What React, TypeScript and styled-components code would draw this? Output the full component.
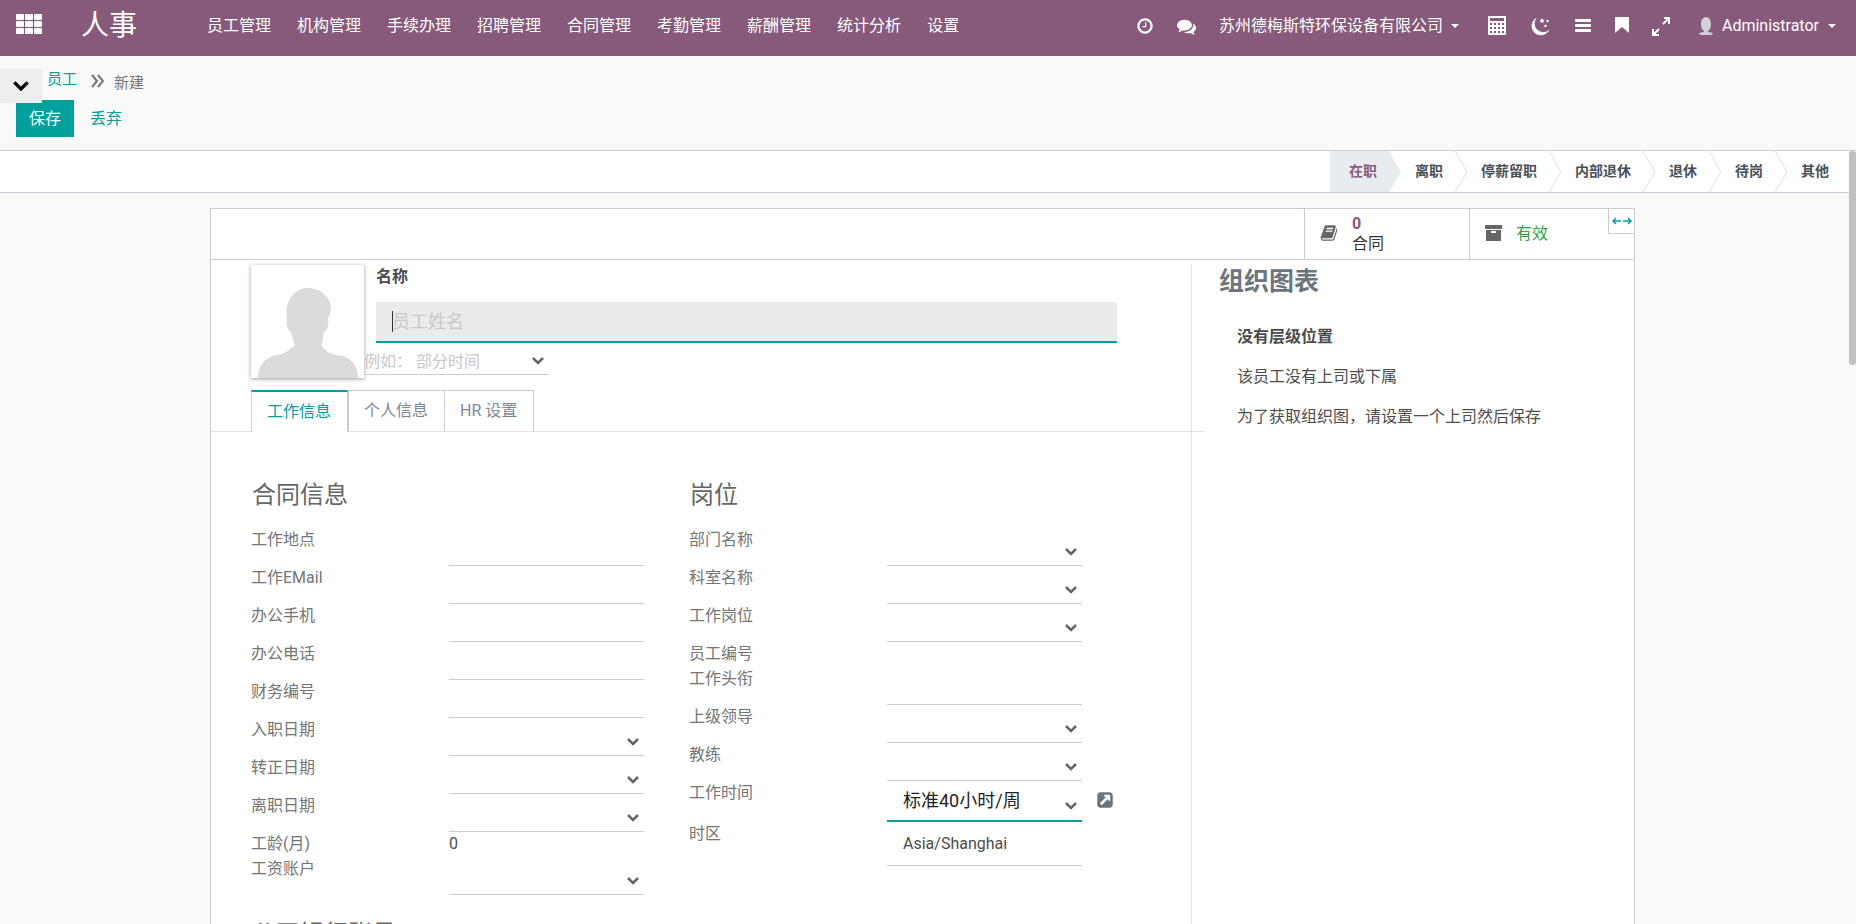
import React from 'react';
import styled, { createGlobalStyle, css } from 'styled-components';

const color = {
  brand: '#875a7b',
  teal: '#00a09d',
  line: '#cccccc',
  edge: '#c9ccd2',
  label: '#666666',
  text: '#4c4c4c',
  muted: '#c8c8c8',
};

const GlobalStyle = createGlobalStyle`
  * { box-sizing: border-box; }
  html, body, #root { height: 100%; }
  body {
    margin: 0;
    overflow: hidden;
    background: #f9f9f9;
    color: ${color.text};
    font-family: Roboto, "Noto Sans CJK SC", sans-serif;
    font-size: 16px;
    line-height: 24px;
  }
  h1, h2, h3, p, ul, ol { margin: 0; padding: 0; list-style: none; }
  button, input, select { font: inherit; color: inherit; border: 0; padding: 0; margin: 0; background: none; border-radius: 0; }
  a { color: inherit; text-decoration: none; }
  svg { display: block; flex: none; }
`;

const Page = styled.div`
  display: flex;
  flex-direction: column;
  height: 100vh;
`;

const Navbar = styled.header`
  display: flex;
  align-items: flex-start;
  height: 56px;
  padding: 0 20px 0 16px;
  background: ${color.brand};
  color: #fff;
  flex: none;
`;

const IconButton = styled.button<{ $size?: number }>`
  display: flex;
  align-items: center;
  justify-content: center;
  width: ${p => p.$size ?? 20}px;
  height: 52px;
  flex: none;
`;

const AppsButton = styled.button`
  display: flex;
  align-items: center;
  height: 48px;
`;

const Brand = styled.a`
  margin-left: 39px;
  width: 104px;
  font-size: 28px;
  line-height: 52px;
`;

const Menu = styled.nav`
  display: flex;
  gap: 26px;
  margin-left: 22px;
  line-height: 52px;
`;

const Systray = styled.div`
  display: flex;
  align-items: center;
  margin-left: auto;
  height: 52px;
`;

const Tools = styled.div`
  display: flex;
  gap: 22px;
  margin: 0 28px 0 23px;
`;

const TrayButton = styled.button`
  display: flex;
  align-items: center;
  gap: 8px;
  height: 52px;
`;

const CompanyButton = styled(TrayButton)`
  margin-right: 6px;
`;

const UserButton = styled(TrayButton)`
  gap: 9px;
`;

const Caret = styled.span`
  border: 4px solid transparent;
  border-top-color: currentColor;
  border-bottom: 0;
`;

const ControlPanel = styled.section`
  display: flex;
  flex-direction: column;
  gap: 4px;
  height: 95px;
  padding-bottom: 13px;
  border-bottom: 1px solid ${color.line};
  flex: none;
`;

const CrumbRow = styled.div`
  display: flex;
  align-items: flex-start;
  height: 40px;
`;

const Toggle = styled.button`
  display: flex;
  align-items: center;
  justify-content: center;
  width: 42px;
  height: 34px;
  margin-top: 13px;
  background: #eeeeee;
  color: #000;
  position: relative;
`;

const Crumbs = styled.ol`
  display: flex;
  align-items: flex-end;
  margin: 8px 0 0 5px;
  font-size: 15px;
  color: #6c757d;
  svg { margin: 0 10px 6px 14px; }
`;

const Crumb = styled.li<{ $current?: boolean }>`
  color: ${p => (p.$current ? '#777777' : color.teal)};
  line-height: ${p => (p.$current ? 22 : 30)}px;
`;

const Actions = styled.div`
  display: flex;
  gap: 3px;
  padding-left: 16px;
`;

const ActionButton = styled.button<{ $primary?: boolean }>`
  height: 37px;
  padding: 0 13px;
  background: ${p => (p.$primary ? color.teal : 'transparent')};
  color: ${p => (p.$primary ? '#fff' : color.teal)};
`;

const Content = styled.main`
  display: flex;
  flex: 1;
  min-height: 0;
  overflow: hidden;
`;

const ScrollArea = styled.div`
  flex: 1;
  min-width: 0;
  overflow: hidden;
`;

const ScrollTrack = styled.div`
  width: 7px;
  flex: none;
`;

const ScrollThumb = styled.div`
  height: 214px;
  border-radius: 3px;
  background: #c1c1c1;
`;

const StatusBar = styled.div`
  display: flex;
  justify-content: flex-end;
  height: 42px;
  background: #fff;
  border-bottom: 1px solid ${color.edge};
`;

const Step = styled.button<{ $active?: boolean; $last?: boolean }>`
  display: flex;
  align-items: center;
  justify-content: flex-end;
  gap: 12px;
  height: 41px;
  line-height: 20px;
  padding-left: ${p => (p.$active ? 19 : 14)}px;
  padding-right: ${p => (p.$last ? 20 : 0)}px;
  background: ${p => (p.$active ? 'linear-gradient(to right, #e9ecef calc(100% - 12px), transparent 0)' : 'none')};
  color: ${p => (p.$active ? color.brand : '#495057')};
  font-size: 14px;
  font-weight: 700;
`;

const StepLabel = styled.span`
  padding-bottom: 2px;
`;

const Sheet = styled.article`
  max-width: 1425px;
  min-height: 900px;
  margin: 15px auto 0;
  background: #fff;
  border: 1px solid ${color.edge};
`;

const SheetWrap = styled.div`
  padding: 0 4px 0 0;
`;

const ButtonBox = styled.div`
  display: flex;
  justify-content: flex-end;
  height: 51px;
  border-bottom: 1px solid ${color.edge};
`;

const StatButton = styled.button<{ $green?: boolean }>`
  display: flex;
  align-items: center;
  gap: 14px;
  width: 165px;
  padding-left: 15px;
  border-left: 1px solid ${color.edge};
  text-align: left;
  line-height: 20px;
  color: ${p => (p.$green ? '#28a745' : '#333333')};
  svg { color: ${color.label}; margin-bottom: 2px; }
`;

const StatText = styled.span`
  display: flex;
  flex-direction: column;
  b { color: ${color.brand}; }
`;

const WidthToggle = styled.button`
  display: flex;
  align-items: center;
  justify-content: center;
  width: 26px;
  height: 25px;
  margin-left: -26px;
  border: solid ${color.line};
  border-width: 0 0 1px 1px;
  color: ${color.teal};
  background: #fff;
`;

const SheetBody = styled.div`
  display: flex;
  align-items: stretch;
  padding-top: 5px;
  min-height: 850px;
`;

const FormSide = styled.div`
  width: 980px;
  flex: none;
`;

const ChartSide = styled.aside`
  flex: 1;
  border-left: 1px solid #e0e2e6;
  padding-left: 27px;
`;

const ChartTitle = styled.h2`
  font-size: 25px;
  line-height: 34px;
  color: #6c757d;
`;

const ChartNote = styled.div`
  display: flex;
  flex-direction: column;
  gap: 16px;
  padding: 26px 0 0 18px;
`;

const Identity = styled.div`
  display: flex;
  align-items: flex-start;
  height: 125px;
  padding: 0 74px 0 40px;
`;

const Avatar = styled.div`
  display: flex;
  align-items: flex-end;
  justify-content: center;
  width: 113px;
  height: 113px;
  flex: none;
  box-shadow: 0 1px 4px rgba(0, 0, 0, 0.4);
  background: #fff;
`;

const IdentityFields = styled.div`
  flex: 1;
  display: flex;
  flex-direction: column;
`;

const NameLabel = styled.label`
  margin-left: 12px;
  font-weight: 700;
`;

const NameInput = styled.input`
  height: 41px;
  margin: 13px 0 0 12px;
  padding: 0 16px;
  background: linear-gradient(#333, #333) 16px 9px / 1px 21px no-repeat, #ebebeb;
  border-bottom: 2px solid ${color.teal};
  font-size: 18px;
  outline: none;
  caret-color: transparent;
  &::placeholder { color: ${color.muted}; opacity: 1; }
`;

const FieldBox = styled.div<{ $width?: number; $focus?: boolean; $tall?: boolean }>`
  display: flex;
  align-items: center;
  width: ${p => p.$width ?? 195}px;
  border-bottom: 1px solid ${color.line};
  color: #666666;
  input, select {
    flex: 1;
    min-width: 0;
    height: 100%;
    appearance: none;
    outline: none;
  }
  input::placeholder { color: ${color.muted}; opacity: 1; }
  ${p => p.$focus && css`
    border-bottom: 2px solid ${color.teal};
    input { padding: 0 0 4px 16px; color: #222222; font-size: 18px; }
  `}
  ${p => p.$tall && css`select { padding-left: 16px; color: ${color.text}; }`}
`;

const TagBox = styled(FieldBox)`
  height: 32px;
  padding-top: 6px;
  svg { margin: 0 5px 2px 0; }
`;

const Tabs = styled.div`
  display: flex;
  height: 42px;
  padding-left: 40px;
  margin-right: -13px;
  border-bottom: 1px solid #dee2e6;
  position: relative;
`;

const Tab = styled.button<{ $active?: boolean }>`
  height: ${p => (p.$active ? 42 : 41)}px;
  padding: 0 16px 0 15px;
  border: 1px solid ${color.edge};
  border-bottom-width: 0;
  margin-right: -1px;
  background: #fff;
  color: #7c8795;
  ${p => p.$active && css`
    color: ${color.teal};
    border-top: 2px solid ${color.teal};
    margin-right: 0;
  `}
`;

const Groups = styled.div`
  display: grid;
  grid-template-columns: 438px 1fr;
  padding: 46px 0 0 40px;
`;

const GroupTitle = styled.h3`
  margin-bottom: 16px;
  padding-left: 1px;
  font-size: 24px;
  line-height: 34px;
  font-weight: 400;
  color: ${color.label};
`;

const Row = styled.div<{ $height?: number }>`
  display: grid;
  grid-template-columns: 198px auto auto 1fr;
  height: ${p => p.$height ?? 38}px;
  color: ${color.text};
  label { color: #757575; }
  svg { margin: 10px 5px 0 0; }
`;

const LinkButton = styled.button`
  display: flex;
  align-items: center;
  margin-left: 14px;
  padding-bottom: 4px;
  color: #6c757d;
  svg { margin: 0; }
`;

const NextTitle = styled(GroupTitle)`
  margin-top: 22px;
`;

/* Icons */

const Glyph = ({ d, size = 18 }: { d: string; size?: number }) => (
  <svg width={size} height={size} viewBox="0 0 1792 1792" fill="currentColor" aria-hidden="true">
    <path d={d} />
  </svg>
);

const glyphs = {
  clock:
    'M1024 544v448q0 14-9 23t-23 9h-320q-14 0-23-9t-9-23v-64q0-14 9-23t23-9h224v-352q0-14 9-23t23-9h64q14 0 23 9t9 23zm416 352q0-148-73-273t-198-198-273-73-273 73-198 198-73 273 73 273 198 198 273 73 273-73 198-198 73-273zm224 0q0 209-103 385.5t-279.5 279.5-385.5 103-385.5-103-279.5-279.5-103-385.5 103-385.5 279.5-279.5 385.5-103 385.5 103 279.5 279.5 103 385.5z',
  comments:
    'M1408 768q0 139-94 257t-256.5 186.5-353.5 68.5q-86 0-176-16-124 88-278 128-36 9-86 16h-3q-11 0-20.5-8t-11.5-21q-1-3-1-6.5t.5-6.5 2-6l2.5-5 3.5-5.5 4-5 4.5-5 4-4.5q5-6 23-25t26-29.5 22.5-29 25-38.5 20.5-44q-124-72-195-177t-71-224q0-139 94-257t256.5-186.5 353.5-68.5 353.5 68.5 256.5 186.5 94 257zm384 256q0 120-71 224.5t-195 176.5q10 24 20.5 44t25 38.5 22.5 29 26 29.5 23 25q1 1 4 4.5t4.5 5 4 5 3.5 5.5l2.5 5 2 6 .5 6.5-1 6.5q-3 14-13 22t-22 7q-50-7-86-16-154-40-278-128-90 16-176 16-271 0-472-132 58 4 88 4 161 0 309-45t264-129q125-92 192-212t67-254q0-77-23-152 129 71 204 178t75 230z',
  book:
    'M1703 478q40 57 18 129l-275 906q-19 64-76.5 107.5t-122.5 43.5h-923q-77 0-148.5-53.5t-99.5-131.5q-24-67-2-127 0-4 3-27t4-37q1-8-3-21.5t-3-19.5q2-11 8-21t16.5-23.5 16.5-23.5q23-38 45-91.5t30-91.5q3-10 .5-30t-.5-28q3-11 17-28t17-23q21-36 42-92t25-90q1-9-2.5-32t.5-28q4-13 22-30.5t22-22.5q19-26 42.5-84.5t27.5-96.5q1-8-3-25.5t-2-26.5q2-8 9-18t18-23 17-21q8-12 16.5-30.5t15-35 16-36 19.5-32 26.5-23.5 36-11.5 47.5 5.5l-1 3q38-9 51-9h761q74 0 114 56t18 130l-274 906q-36 119-71.5 153.5t-128.5 34.5h-869q-27 0-38 15-11 16-1 43 24 70 144 70h923q29 0 56-15.5t35-41.5l300-987q7-22 5-57 38 15 59 43zm-1064 2q-4 13 2 22.5t20 9.5h608q13 0 25.5-9.5t16.5-22.5l21-64q4-13-2-22.5t-20-9.5h-608q-13 0-25.5 9.5t-16.5 22.5zm-83 256q-4 13 2 22.5t20 9.5h608q13 0 25.5-9.5t16.5-22.5l21-64q4-13-2-22.5t-20-9.5h-608q-13 0-25.5 9.5t-16.5 22.5z',
  external:
    'M1408 928v-480q0-26-19-45t-45-19h-480q-42 0-59 39-17 41 14 70l144 144-534 534q-19 19-19 45t19 45l102 102q19 19 45 19t45-19l534-534 144 144q18 19 45 19 12 0 25-5 39-17 39-59zm256-512v960q0 119-84.5 203.5t-203.5 84.5h-960q-119 0-203.5-84.5t-84.5-203.5v-960q0-119 84.5-203.5t203.5-84.5h960q119 0 203.5 84.5t84.5 203.5z',
};

const AppsIcon = () => (
  <svg width="26" height="20" viewBox="0 0 26 20" fill="currentColor" aria-hidden="true">
    {[0, 9, 18].map(x => [0, 7, 14].map(y => <rect key={`${x}-${y}`} x={x} y={y} width="8" height="6" rx="1" />))}
  </svg>
);

const CalculatorIcon = () => (
  <svg width="18" height="20" viewBox="0 0 18 20" aria-hidden="true">
    <rect width="18" height="19" rx="1" fill="#fff" />
    <rect x="2" y="2" width="14" height="3" fill={color.brand} />
    {[2, 6, 10, 14].map(x => [7, 11, 15].map(y => <rect key={`${x}-${y}`} x={x} y={y} width="2" height="2" fill={color.brand} />))}
  </svg>
);

const MoonIcon = () => (
  <svg width="20" height="20" viewBox="0 0 20 20" fill="currentColor" aria-hidden="true">
    <path d="M7 1.500A9.300 9.300 0 1 0 19.500 13.500A7.800 7.800 0 0 1 7 1.500z" />
    <path d="M12 2l.8 1.700 1.800.3-1.300 1.300.3 1.800-1.600-.9-1.600.9.3-1.800L9.400 4l1.800-.3z" />
    <circle cx="17.500" cy="5" r="1.200" />
    <circle cx="15.500" cy="10" r="1.200" />
  </svg>
);

const BarsIcon = () => (
  <svg width="16" height="14" viewBox="0 0 16 14" fill="currentColor" aria-hidden="true">
    <rect width="16" height="3" rx="1" />
    <rect y="5" width="16" height="3" rx="1" />
    <rect y="10" width="16" height="3" rx="1" />
  </svg>
);

const BookmarkIcon = () => (
  <svg width="14" height="18" viewBox="0 0 14 18" fill="currentColor" aria-hidden="true">
    <path d="M1 0h12q1 0 1 1v15l-7-6-7 6V1q0-1 1-1z" />
  </svg>
);

const FullscreenIcon = () => (
  <svg width="20" height="20" viewBox="0 0 20 20" fill="none" stroke="currentColor" strokeWidth="2" aria-hidden="true">
    <path d="M13 2h5v6M18 2l-6 6M2 13v6h6M2 19l6-6" />
  </svg>
);

const UserIcon = () => (
  <svg width="14" height="18" viewBox="0 0 14 18" aria-hidden="true">
    <path d="M7 0c3 0 5 3 5 7 0 3-1 6-3 7v1c3 0 5 1 5 2l-2 1H2l-2-1c0-1 2-2 5-2v-1C3 13 2 10 2 7c0-4 2-7 5-7z" fill="#cdd3d8" />
  </svg>
);

const ChevronIcon = ({ width = 12 }: { width?: number }) => (
  <svg width={width} height={(width * 2) / 3} viewBox="0 0 12 8" fill="none" stroke="currentColor" strokeWidth="2.500" aria-hidden="true">
    <path d="M1 1l5 5 5-5" />
  </svg>
);

const DoubleChevron = () => (
  <svg width="13" height="14" viewBox="0 0 13 14" fill="none" stroke="currentColor" strokeWidth="2" aria-hidden="true">
    <path d="M1 1l5 6-5 6M7 1l5 6-5 6" />
  </svg>
);

const ArchiveIcon = () => (
  <svg width="17" height="16" viewBox="0 0 17 16" fill="currentColor" aria-hidden="true">
    <rect width="17" height="4" />
    <path d="M1 5h15v11H1zM6 6v2h5V6z" fillRule="evenodd" />
  </svg>
);

const WidthIcon = () => (
  <svg width="20" height="8" viewBox="0 0 20 8" fill="none" stroke="currentColor" strokeWidth="1.500" aria-hidden="true">
    <path d="M9 4H1M4 1L1 4l3 3M11 4h8M16 1l3 3-3 3" />
  </svg>
);

const StepArrow = ({ filled }: { filled?: boolean }) => (
  <svg width="12" height="41" viewBox="0 0 12 41" fill={filled ? '#e9ecef' : 'none'} stroke={filled ? 'none' : '#dee2e6'} aria-hidden="true">
    <path d="M0 0l12 21L0 41" />
  </svg>
);

const PersonShape = () => (
  <svg width="100" height="90" viewBox="0 0 100 90" fill="#dbdbdb" aria-hidden="true">
    <path d="M50 0c5 0 9 2 13 3 6 6 10 10 10 17 0 5-2 7-3 10 1 6 0 12-4 14-1 5-1 9-3 13 4 6 9 9 16 10 12 1 21 9 21 23H0c0-14 9-22 20-23 7-2 12-5 17-10-2-4-3-9-4-13-4-2-5-8-4-14-1-5-1-10 1-15C33 6 41 0 50 0z" />
  </svg>
);

/* Data */

const menuItems = ['员工管理', '机构管理', '手续办理', '招聘管理', '合同管理', '考勤管理', '薪酬管理', '统计分析', '设置'];
const steps = ['在职', '离职', '停薪留职', '内部退休', '退休', '待岗', '其他'];

type Field = { label: string; kind: 'text' | 'pick' | 'read'; value?: string };

const contractFields: Field[] = [
  { label: '工作地点', kind: 'text' },
  { label: '工作EMail', kind: 'text' },
  { label: '办公手机', kind: 'text' },
  { label: '办公电话', kind: 'text' },
  { label: '财务编号', kind: 'text' },
  { label: '入职日期', kind: 'pick' },
  { label: '转正日期', kind: 'pick' },
  { label: '离职日期', kind: 'pick' },
  { label: '工龄(月)', kind: 'read', value: '0' },
  { label: '工资账户', kind: 'pick' },
];

const positionFields: Field[] = [
  { label: '部门名称', kind: 'pick' },
  { label: '科室名称', kind: 'pick' },
  { label: '工作岗位', kind: 'pick' },
  { label: '员工编号', kind: 'read' },
  { label: '工作头衔', kind: 'text' },
  { label: '上级领导', kind: 'pick' },
  { label: '教练', kind: 'pick' },
];

const FormRow = ({ field, id }: { field: Field; id: string }) =>
  field.kind === 'read' ? (
    <Row $height={25}>
      <label htmlFor={id}>{field.label}</label>
      <output id={id}>{field.value}</output>
    </Row>
  ) : (
    <Row>
      <label htmlFor={id}>{field.label}</label>
      <FieldBox>
        <input id={id} type="text" />
        {field.kind === 'pick' && <ChevronIcon />}
      </FieldBox>
    </Row>
  );

export default function App() {
  return (
    <Page>
      <GlobalStyle />
      <Navbar>
        <AppsButton aria-label="应用"><AppsIcon /></AppsButton>
        <Brand href="#">人事</Brand>
        <Menu>
          {menuItems.map(item => <a key={item} href="#">{item}</a>)}
        </Menu>
        <Systray>
          <TrayButton aria-label="活动"><Glyph d={glyphs.clock} /></TrayButton>
          <Tools>
            <IconButton aria-label="消息"><Glyph d={glyphs.comments} size={19} /></IconButton>
            <CompanyButton>苏州德梅斯特环保设备有限公司<Caret /></CompanyButton>
            <IconButton aria-label="计算器"><CalculatorIcon /></IconButton>
            <IconButton $size={22} aria-label="夜间模式"><MoonIcon /></IconButton>
            <IconButton aria-label="菜单"><BarsIcon /></IconButton>
            <IconButton $size={14} aria-label="书签"><BookmarkIcon /></IconButton>
            <IconButton aria-label="全屏"><FullscreenIcon /></IconButton>
          </Tools>
          <UserButton><UserIcon />Administrator<Caret /></UserButton>
        </Systray>
      </Navbar>

      <ControlPanel>
        <CrumbRow>
          <Toggle aria-label="展开"><ChevronIcon width={16} /></Toggle>
          <Crumbs>
            <Crumb><a href="#">员工</a></Crumb>
            <li aria-hidden="true"><DoubleChevron /></li>
            <Crumb $current>新建</Crumb>
          </Crumbs>
        </CrumbRow>
        <Actions>
          <ActionButton $primary>保存</ActionButton>
          <ActionButton>丢弃</ActionButton>
        </Actions>
      </ControlPanel>

      <Content>
        <ScrollArea>
          <StatusBar>
            {steps.map((step, i) => (
              <Step key={step} $active={i === 0} $last={i === steps.length - 1}>
                <StepLabel>{step}</StepLabel>
                {i < steps.length - 1 && <StepArrow filled={i === 0} />}
              </Step>
            ))}
          </StatusBar>
          <SheetWrap>
            <Sheet>
              <ButtonBox>
                <StatButton>
                  <Glyph d={glyphs.book} />
                  <StatText><b>0</b>合同</StatText>
                </StatButton>
                <StatButton $green><ArchiveIcon />有效</StatButton>
                <WidthToggle aria-label="切换宽度"><WidthIcon /></WidthToggle>
              </ButtonBox>
              <SheetBody>
                <FormSide>
                  <Identity>
                    <Avatar><PersonShape /></Avatar>
                    <IdentityFields>
                      <NameLabel htmlFor="name">名称</NameLabel>
                      <NameInput id="name" placeholder="员工姓名" autoFocus />
                      <TagBox $width={185}>
                        <input aria-label="标签" placeholder="例如： 部分时间" />
                        <ChevronIcon />
                      </TagBox>
                    </IdentityFields>
                  </Identity>
                  <Tabs role="tablist">
                    <Tab role="tab" $active>工作信息</Tab>
                    <Tab role="tab">个人信息</Tab>
                    <Tab role="tab">HR 设置</Tab>
                  </Tabs>
                  <Groups>
                    <section>
                      <GroupTitle>合同信息</GroupTitle>
                      {contractFields.map((f, i) => <FormRow key={f.label} field={f} id={`contract-${i}`} />)}
                      <NextTitle>公司银行账号</NextTitle>
                    </section>
                    <section>
                      <GroupTitle>岗位</GroupTitle>
                      {positionFields.map((f, i) => <FormRow key={f.label} field={f} id={`position-${i}`} />)}
                      <Row $height={41}>
                        <label htmlFor="hours">工作时间</label>
                        <FieldBox $focus>
                          <input id="hours" defaultValue="标准40小时/周" />
                          <ChevronIcon />
                        </FieldBox>
                        <LinkButton aria-label="打开"><Glyph d={glyphs.external} /></LinkButton>
                      </Row>
                      <Row $height={44}>
                        <label htmlFor="tz">时区</label>
                        <FieldBox $tall>
                          <select id="tz"><option>Asia/Shanghai</option></select>
                        </FieldBox>
                      </Row>
                    </section>
                  </Groups>
                </FormSide>
                <ChartSide>
                  <ChartTitle>组织图表</ChartTitle>
                  <ChartNote>
                    <strong>没有层级位置</strong>
                    <p>该员工没有上司或下属</p>
                    <p>为了获取组织图，请设置一个上司然后保存</p>
                  </ChartNote>
                </ChartSide>
              </SheetBody>
            </Sheet>
          </SheetWrap>
        </ScrollArea>
        <ScrollTrack><ScrollThumb /></ScrollTrack>
      </Content>
    </Page>
  );
}
